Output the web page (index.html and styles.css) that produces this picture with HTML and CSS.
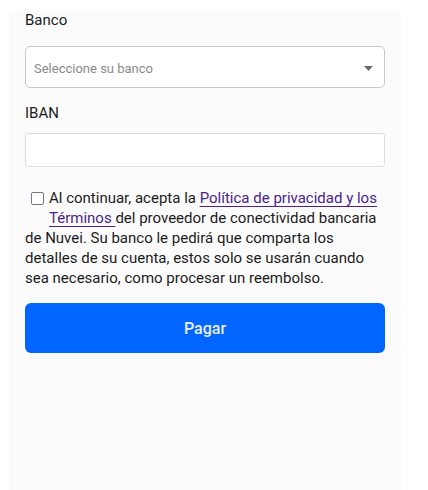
FILE: index.html
```html
<!DOCTYPE html>
<html lang="es">

<head>
    <meta charset="UTF-8">
    <meta name="viewport" content="width=device-width, initial-scale=1.0">
    <title>Pago bancario</title>
    <link rel="stylesheet" href="styles.css">
</head>

<body>
    <div class="panel">
        <form class="pay-form">
            <label class="field-label" for="bank">Banco</label>
            <div class="select-box">
                <span class="placeholder">Seleccione su banco</span>
                <svg class="caret" width="9" height="5" viewBox="0 0 9 5"><path d="M0 0h9L4.5 5z" fill="#6b6b6b"/></svg>
            </div>

            <label class="field-label iban-label" for="iban">IBAN</label>
            <input class="text-input" type="text" id="iban" name="iban">

            <p class="consent">
                <input class="check" type="checkbox" id="consent">
                Al continuar, acepta la <a href="#" class="terms">Política de privacidad y los Términos </a>del proveedor de conectividad bancaria de Nuvei. Su banco le pedirá que comparta los detalles de su cuenta, estos solo se usarán cuando sea necesario, como procesar un reembolso.
            </p>

            <button type="button" class="pay-button">Pagar</button>
        </form>
    </div>
</body>

</html>
```

FILE: styles.css
```css
body {
    margin: 0;
    background: #ffffff;
    font-family: Roboto, "Noto Sans", sans-serif;
    color: #1b1b1b;
}

.panel {
    width: 392px;
    height: 480px;
    margin: 10px 0 0 9px;
    background: #fbfbfb;
}

.pay-form {
    padding: 0 16px;
}

.field-label {
    display: block;
    font-size: 15px;
    line-height: 20px;
    margin: 0 0 16px;
}

.iban-label {
    margin-bottom: 10px;
}

.select-box {
    display: flex;
    align-items: center;
    justify-content: space-between;
    height: 40px;
    padding: 0 11px 0 8px;
    background: #ffffff;
    border: 1px solid #c9c9cd;
    border-radius: 5px;
    margin-bottom: 15px;
}

.placeholder {
    font-size: 13px;
    color: #8a8a8a;
    position: relative;
    top: 1px;
}

.caret {
    position: relative;
    top: 1px;
}

.text-input {
    display: block;
    box-sizing: border-box;
    width: 100%;
    height: 34px;
    margin: 0 0 21px;
    background: #ffffff;
    border: 1px solid #dedee0;
    border-radius: 3px;
}

.consent {
    margin: 0 0 15px;
    font-size: 15px;
    line-height: 20px;
    color: #1b1b1b;
}

.check {
    float: left;
    width: 13px;
    height: 13px;
    margin: 4px 5px 10px 6px;
    appearance: none;
    border: 1.5px solid #7b7589;
    border-radius: 2px;
    background: #ffffff;
}

.terms {
    color: #4a1f8e;
    text-decoration: underline;
    text-underline-offset: 3px;
}

.pay-button {
    display: block;
    width: 100%;
    height: 50px;
    border: none;
    border-radius: 6px;
    background: #0066ff;
    color: #e8eeff;
    font-family: Roboto, "Noto Sans", sans-serif;
    font-size: 16px;
    font-weight: 500;
    cursor: pointer;
}
```
